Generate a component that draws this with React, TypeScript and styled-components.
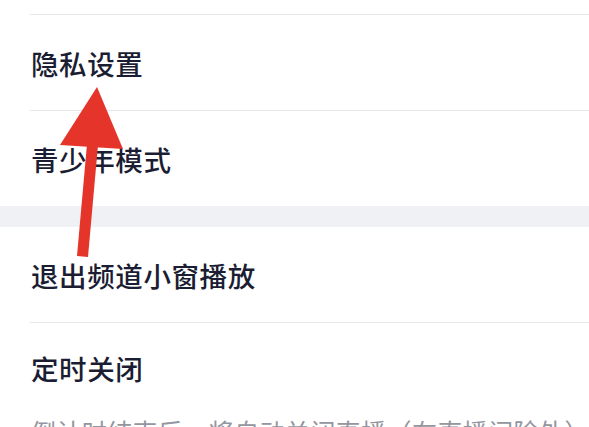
import React from 'react';
import styled, { createGlobalStyle } from 'styled-components';

const GlobalStyle = createGlobalStyle`
  html, body {
    margin: 0;
    padding: 0;
    background: #ffffff;
  }
  body {
    font-family: "Noto Sans CJK SC", "Noto Sans", sans-serif;
    overflow: hidden;
  }
`;

const Page = styled.div`
  position: relative;
  width: 589px;
  height: 427px;
  overflow: hidden;
  background: #ffffff;
  display: flex;
  flex-direction: column;

  & > * {
    flex-shrink: 0;
  }
`;

const Section = styled.div`
  background: #ffffff;
  padding-left: 30px;
  display: flex;
  flex-direction: column;
`;

const Stub = styled.div`
  height: 14px;
`;

const Row = styled.div<{ $divider?: boolean; $height?: number }>`
  height: ${p => p.$height ?? 96}px;
  flex-shrink: 0;
  box-sizing: border-box;
  border-top: ${p => (p.$divider ? '1px solid #e8e8ec' : 'none')};
  display: flex;
  align-items: center;
  padding-left: 1px;
`;

const Title = styled.span`
  font-size: 27.5px;
  line-height: 36px;
  font-weight: 500;
  color: #1b1d33;
  letter-spacing: 0.6px;
`;

const TimerRow = styled.div`
  flex-shrink: 0;
  border-top: 1px solid #e8e8ec;
  padding: 27px 0 0 1px;
  display: flex;
  flex-direction: column;
  gap: 27px;
`;

const Desc = styled.span`
  font-size: 25px;
  line-height: 36px;
  color: #94969f;
  letter-spacing: 0.4px;
  white-space: nowrap;
`;

const Band = styled.div`
  height: 21px;
  background: #f0f1f5;
`;

const Arrow = styled.svg`
  position: absolute;
  left: 0;
  top: 0;
  pointer-events: none;
`;

export default function App() {
  return (
    <Page>
      <GlobalStyle />
      <Section>
        <Stub />
        <Row $divider>
          <Title>隐私设置</Title>
        </Row>
        <Row $divider>
          <Title>青少年模式</Title>
        </Row>
      </Section>
      <Band />
      <Section>
        <Row $height={95}>
          <Title>退出频道小窗播放</Title>
        </Row>
        <TimerRow>
          <Title>定时关闭</Title>
          <Desc>倒计时结束后，将自动关闭直播（在直播间除外）</Desc>
        </TimerRow>
      </Section>
      <Arrow width="589" height="427" viewBox="0 0 589 427">
        <polygon points="97,87 60,145 123,149" fill="#e5352a" />
        <polygon points="87,144 98,145 88,257 77,256" fill="#e5352a" />
      </Arrow>
    </Page>
  );
}
